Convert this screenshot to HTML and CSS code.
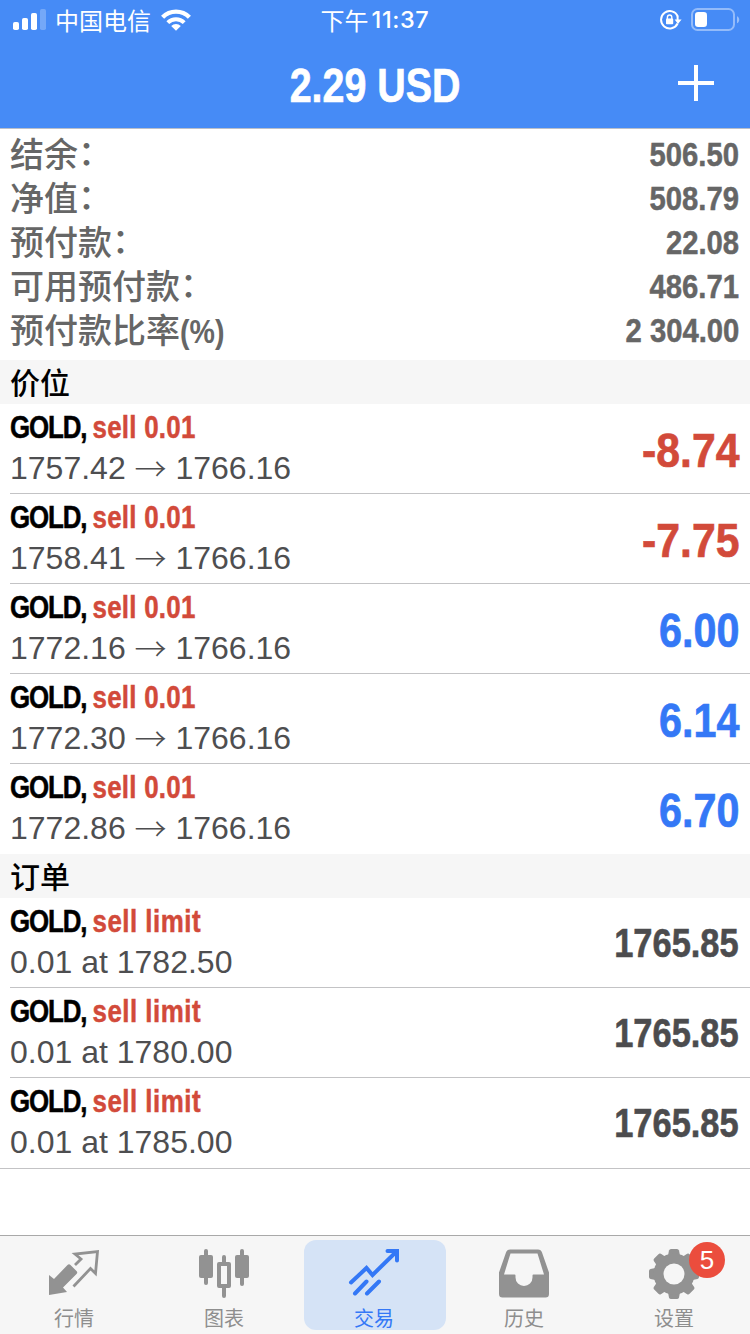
FILE: index.html
```html
<!DOCTYPE html>
<html lang="zh-CN">

<head>
  <meta charset="UTF-8">
  <meta name="viewport" content="width=device-width, initial-scale=1.0">
  <title>交易</title>
  <link rel="stylesheet" href="styles.css">
</head>

<body>
  <header>
    <div class="status-bar">
      <div class="status-left">
        <svg class="signal" width="34" height="22" viewBox="0 0 34 22" fill="#fff">
          <rect x="0" y="13" width="6" height="8" rx="1.8"/>
          <rect x="9" y="9" width="6" height="12" rx="1.8"/>
          <rect x="18" y="4" width="6" height="17" rx="1.8"/>
          <rect x="27" y="0" width="6" height="21" rx="1.8" opacity="0.25"/>
        </svg>
        <span class="carrier">中国电信</span>
        <svg class="wifi" width="30" height="22" viewBox="0 0 30 22" fill="none" stroke="#fff">
          <path d="M1.6 8.2a19 19 0 0 1 26.8 0" stroke-width="4.4"/>
          <path d="M6.8 13.6a11.6 11.6 0 0 1 16.4 0" stroke-width="4"/>
          <path d="M15 21.8l-4.8-4.7a6.8 6.8 0 0 1 9.6 0z" fill="#fff" stroke="none"/>
        </svg>
      </div>
      <div class="time">下午<span class="clock">11:37</span></div>
      <div class="status-right">
        <svg width="22" height="20" viewBox="0 0 22 20">
          <path d="M17.6 13.5A8.7 8.7 0 1 1 17.8 6.4" fill="none" stroke="#fff" stroke-width="2"/>
          <path d="M14.6 9.5h7l-3.6 4.4z" fill="#fff"/>
          <path d="M17.6 6v5" stroke="#fff" stroke-width="2"/>
          <rect x="6" y="8.6" width="7.2" height="5.6" rx="0.8" fill="#fff"/>
          <path d="M7.4 9V7.2a2.2 2.2 0 0 1 4.4 0V9" fill="none" stroke="#fff" stroke-width="1.4"/>
        </svg>
        <svg width="50" height="24" viewBox="0 0 50 24">
          <rect x="1" y="1" width="42" height="21" rx="5.5" fill="none" stroke="#fff" stroke-opacity="0.42" stroke-width="2"/>
          <rect x="4" y="4" width="12" height="15" rx="3.2" fill="#fff"/>
          <path d="M46 8.2c3 1.2 3 5.8 0 7z" fill="#fff" opacity="0.45"/>
        </svg>
      </div>
    </div>
    <div class="title-bar">
      <h1>2.29 USD</h1>
      <svg class="add" width="36" height="36" viewBox="0 0 36 36">
        <path d="M18 0v36M0 18h36" stroke="#fff" stroke-width="4"/>
      </svg>
    </div>
  </header>

  <!-- Account summary -->
  <section class="summary">
    <div class="summary-row"><span>结余<i class="colon">：</i></span><b>506.50</b></div>
    <div class="summary-row"><span>净值<i class="colon">：</i></span><b>508.79</b></div>
    <div class="summary-row"><span>预付款<i class="colon">：</i></span><b>22.08</b></div>
    <div class="summary-row"><span>可用预付款<i class="colon">：</i></span><b>486.71</b></div>
    <div class="summary-row"><span>预付款比率<i class="percent">(%)</i></span><b>2 304.00</b></div>
  </section>

  <!-- Open positions -->
  <h2>价位</h2>
  <ul class="list">
    <li class="item">
      <div class="info">
        <p class="name">GOLD, <span>sell 0.01</span></p>
        <p class="price">1757.42 <span>→</span> 1766.16</p>
      </div>
      <b class="profit loss">-8.74</b>
    </li>
    <li class="item">
      <div class="info">
        <p class="name">GOLD, <span>sell 0.01</span></p>
        <p class="price">1758.41 <span>→</span> 1766.16</p>
      </div>
      <b class="profit loss">-7.75</b>
    </li>
    <li class="item">
      <div class="info">
        <p class="name">GOLD, <span>sell 0.01</span></p>
        <p class="price">1772.16 <span>→</span> 1766.16</p>
      </div>
      <b class="profit">6.00</b>
    </li>
    <li class="item">
      <div class="info">
        <p class="name">GOLD, <span>sell 0.01</span></p>
        <p class="price">1772.30 <span>→</span> 1766.16</p>
      </div>
      <b class="profit">6.14</b>
    </li>
    <li class="item">
      <div class="info">
        <p class="name">GOLD, <span>sell 0.01</span></p>
        <p class="price">1772.86 <span>→</span> 1766.16</p>
      </div>
      <b class="profit">6.70</b>
    </li>
  </ul>

  <!-- Pending orders -->
  <h2>订单</h2>
  <ul class="list orders">
    <li class="item">
      <div class="info">
        <p class="name">GOLD, <span>sell limit</span></p>
        <p class="price">0.01 at 1782.50</p>
      </div>
      <b class="quote">1765.85</b>
    </li>
    <li class="item">
      <div class="info">
        <p class="name">GOLD, <span>sell limit</span></p>
        <p class="price">0.01 at 1780.00</p>
      </div>
      <b class="quote">1765.85</b>
    </li>
    <li class="item">
      <div class="info">
        <p class="name">GOLD, <span>sell limit</span></p>
        <p class="price">0.01 at 1785.00</p>
      </div>
      <b class="quote">1765.85</b>
    </li>
  </ul>

  <!-- Bottom tabs -->
  <nav class="tabs">
    <a class="tab">
      <svg width="52" height="52" viewBox="0 0 52 52">
        <path d="M1 47V27l5 4L19.5 17q1.500-1.500 3 0l6 6q1.500 1.500 0 3L15 39.500l4 4.500z" fill="#929292"/>
        <path d="M25.500 38.500L42.500 20.500l5 5L49.500 3.500l-22.500 2.500 6 5-6 6" fill="none" stroke="#929292" stroke-width="2.800"/>
      </svg>
      <span>行情</span>
    </a>
    <a class="tab">
      <svg width="52" height="52" viewBox="0 0 52 52" fill="#929292">
        <rect x="1" y="7" width="14" height="23" rx="2"/>
        <rect x="6" y="1" width="4" height="36" rx="2"/>
        <rect x="37" y="7" width="14" height="23" rx="2"/>
        <rect x="42" y="1" width="4" height="37" rx="2"/>
        <path d="M24 14V9a2 2 0 0 1 4 0v5h3a2 2 0 0 1 2 2v22a2 2 0 0 1-2 2h-3v8a2 2 0 0 1-4 0v-8h-3a2 2 0 0 1-2-2V16a2 2 0 0 1 2-2zM23 18v18h6V18z" fill-rule="evenodd"/>
      </svg>
      <span>图表</span>
    </a>
    <a class="tab active">
      <svg width="52" height="52" viewBox="0 0 52 52" fill="none" stroke="#3478f6" stroke-width="4">
        <path d="M3 34.500l15.500-14.500 6 7L48 4" stroke-linecap="round"/>
        <path d="M39.500 3h9.500v9.500M7 45.500L18.500 33.500M19 45.500L31 33.500" stroke-linecap="round"/>
      </svg>
      <span>交易</span>
    </a>
    <a class="tab">
      <svg width="52" height="52" viewBox="0 0 52 52">
        <path d="M12 1.500h28q3 0 4 3l7 20V46q0 3.500-3.500 3.500h-43Q1 49.500 1 46V24.500l7-20q1-3 4-3zM12.500 5.500L6 26.500h10.500q1 0 1 1v2a8.500 8.500 0 0 0 17 0v-2q0-1 1-1H46L39.500 5.500z" fill="#929292" fill-rule="evenodd"/>
      </svg>
      <span>历史</span>
    </a>
    <a class="tab">
      <svg width="52" height="52" viewBox="0 0 52 52" fill="#929292">
        <path d="M19.500 10L21 2.500Q21.500 1 23 1h6q1.500 0 2 1.500L32.500 10v32L31 49.500q-.5 1.500-2 1.500h-6q-1.500 0-2-1.500L19.500 42z" id="tooth"/>
        <use href="#tooth" transform="rotate(45 26 26)"/>
        <use href="#tooth" transform="rotate(90 26 26)"/>
        <use href="#tooth" transform="rotate(135 26 26)"/>
        <circle cx="26" cy="26" r="20.500"/>
        <circle cx="26" cy="26" r="10.500" fill="#f6f6f6"/>
      </svg>
      <span>设置</span>
      <em class="badge">5</em>
    </a>
  </nav>
</body>

</html>
```
FILE: styles.css
```css
* {
  box-sizing: border-box;
  margin: 0;
  padding: 0;
}

body {
  width: 750px;
  height: 1334px;
  display: flex;
  flex-direction: column;
  overflow: hidden;
  background-color: #fff;
  font-family: "Liberation Sans", "Noto Sans CJK SC", sans-serif;
}

svg {
  display: block;
  flex-shrink: 0;
}

header {
  height: 129px;
  background-color: #468bf6;
  border-bottom: 1px solid #b9bfca;
  color: #fff;
}

.status-bar {
  height: 40px;
  display: grid;
  grid-template-columns: 1fr auto 1fr;
  align-items: center;
}

.status-left {
  display: flex;
  align-items: center;
  padding-left: 13px;
}

.carrier {
  margin: 0 10px 0 8px;
  font: 400 24px/40px "Noto Sans CJK SC", sans-serif;
}

.time {
  display: flex;
  font: 400 24px/40px "Noto Sans CJK SC", sans-serif;
}

.clock {
  margin-left: 3px;
  font: 500 23.5px/40px Inter, sans-serif;
  letter-spacing: 0.6px;
}

.status-right {
  display: flex;
  justify-content: flex-end;
  align-items: center;
  gap: 9px;
  padding-right: 9px;
}

.title-bar {
  height: 88px;
  display: grid;
  grid-template-columns: 1fr auto 1fr;
  align-items: center;
}

h1 {
  grid-column: 2;
  padding-top: 3px;
  font-size: 48px;
  line-height: 85px;
  -webkit-text-stroke: 0.7px;
  transform: scaleX(0.82);
}

.add {
  justify-self: end;
  margin: 0 36px 2px 0;
}

/* Account summary */
.summary {
  height: 231px;
  padding: 3px 11px 0 10px;
  color: #666;
}

.summary-row {
  display: flex;
  justify-content: space-between;
  height: 44px;
  line-height: 44px;
  font-size: 34px;
}

.summary-row span {
  height: 41px;
  font-family: "Noto Sans CJK SC", sans-serif;
  font-weight: 500;
  line-height: 41px;
}

.summary-row b {
  -webkit-text-stroke: 0.5px;
  transform: scaleX(0.86);
  transform-origin: right;
}

.colon {
  display: inline-block;
  font-style: normal;
  transform: translateY(-2px);
}

.percent {
  display: inline-block;
  font: bold 34px/38px "Liberation Sans", sans-serif;
  transform: scaleX(0.84);
  transform-origin: left;
}

h2 {
  height: 44px;
  padding-left: 10px;
  background-color: #f6f6f6;
  color: #000;
  font: 500 30px/42px "Noto Sans CJK SC", sans-serif;
}

/* Lists */
.list {
  list-style: none;
}

.item {
  height: 90px;
  margin-left: 10px;
  padding-right: 11px;
  display: flex;
  justify-content: space-between;
  border-bottom: 1px solid #c3c3c5;
}

.item:last-child {
  border-bottom: none;
}

.orders .item:last-child {
  height: 91px;
  margin-left: 0;
  padding-left: 10px;
  border-bottom: 1px solid #c3c3c5;
}

.info {
  padding-top: 3px;
}

.name {
  color: #000;
  font-size: 32px;
  font-weight: bold;
  line-height: 41px;
  letter-spacing: -1.4px;
  white-space: nowrap;
  -webkit-text-stroke: 0.5px;
  transform: scaleX(0.81);
  transform-origin: left;
}

.name span {
  color: #d24a3a;
  letter-spacing: 0.3px;
}

.orders .name span {
  letter-spacing: 0.6px;
}

.price {
  color: #4e4e50;
  font-size: 32px;
  line-height: 41px;
}

.price span {
  font-family: "Noto Sans CJK SC", sans-serif;
  font-weight: 300;
  line-height: 1;
  vertical-align: -2px;
}

.profit {
  color: #3478f6;
  font-size: 48px;
  line-height: 93px;
  -webkit-text-stroke: 0.7px;
  transform: scaleX(0.86);
  transform-origin: right;
}

.loss {
  color: #d24a3a;
  transform: scaleX(0.89);
}

.quote {
  color: #4c4c4e;
  font-size: 40px;
  line-height: 90px;
  -webkit-text-stroke: 0.6px;
  transform: scaleX(0.86);
  transform-origin: right;
}

/* Bottom tabs */
.tabs {
  display: flex;
  height: 99px;
  margin-top: auto;
  border-top: 1px solid #a9a9a9;
  background-color: #f6f6f6;
}

.tab {
  position: relative;
  width: 142px;
  height: 90px;
  margin: 4px;
  padding: 8px 2px 0 0;
  border-radius: 12px;
  display: flex;
  flex-direction: column;
  align-items: center;
  color: #8e8e8e;
  font: 400 20px/30px "Noto Sans CJK SC", sans-serif;
}

.tab span {
  margin-top: 3px;
}

.active {
  background-color: #d5e3f6;
  color: #3478f6;
}

.badge {
  position: absolute;
  top: 2px;
  right: 21px;
  width: 36px;
  height: 36px;
  border-radius: 50%;
  background-color: #eb4d3d;
  color: #fff;
  font: normal 26px/36px "Liberation Sans", sans-serif;
  text-align: center;
}
```
